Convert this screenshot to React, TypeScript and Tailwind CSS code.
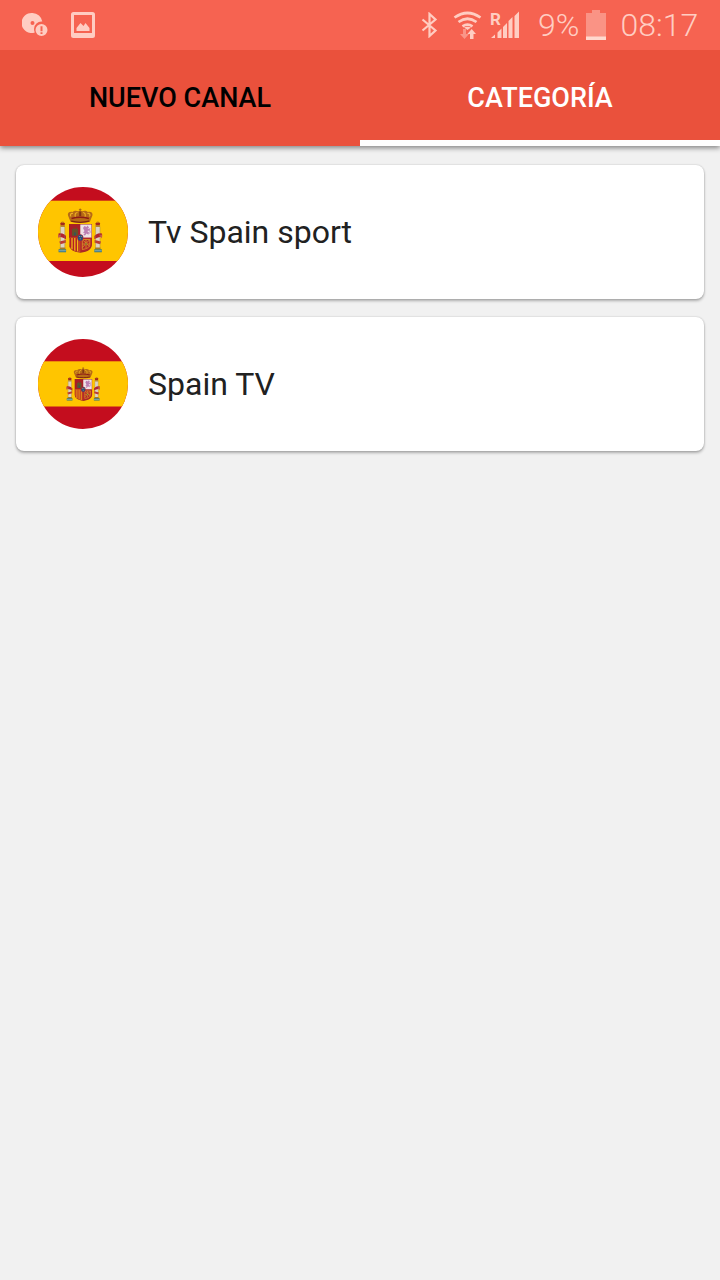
import React from "react";

function Column({ flip = false }: { flip?: boolean }) {
  return (
    <g transform={flip ? "translate(84.4 0) scale(-1 1)" : undefined}>
      <path d="M22.5 39h4.2v22h-4.2z" fill="#dcd3c4" />
      <path d="M22.3 38.2h4.7v1.8h-4.7z" fill="#b98a2f" />
      <path d="M22.2 36.2l1.2-.9h2l1.6 1-.5 2h-3.8z" fill="#a3281e" />
      <path d="M23.7 34.6h1.8v1.2h-1.8z" fill="#c48a1c" />
      <path d="M20.5 46.5c3.5-1 6.500 1 7.500 2.500v3.200c-2-1.500-5-2.700-7.500-2.200z" fill="#b3222c" />
      <path d="M20 47.500l3 1-2.500 3z" fill="#c95b47" />
      <path d="M21.300 54.500l6.500-1.500v2.700l-5.500 1.500z" fill="#c0392f" />
      <path d="M21.800 60.400h5.600v1.700h-5.600z" fill="#a87924" />
      <path d="M20.600 62.200h7.500v3h-7.500z" fill="#2f7180" />
      <path d="M20.800 63.800h7.100" stroke="#d5dfd4" strokeWidth=".6" />
      <path d="M22.400 40v20.500M26.800 40v20.500" stroke="#8f8468" strokeWidth=".4" />
    </g>
  );
}

function Emblem() {
  return (
    <g>
      <Column />
      <Column flip />
      <path d="M32.500 34.800l-2.500-6.300c-.8-2.500 1.500-4.200 4.500-3.500 1.500-1.500 4-1.700 5.600-.7 1-.8 3.200-.8 4.200 0 1.600-1 4.100-.8 5.600.7 3-.7 5.300 1 4.500 3.500l-2.500 6.300c-5 1.500-14.400 1.500-19.400 0z" fill="#b66a16" />
      <path d="M33 29.500c-1.500-2 0-3.500 2-3M37.500 30c-1-2.500 0-4.500 2-4.500M51.400 29.500c1.500-2 0-3.500-2-3M46.900 30c1-2.500 0-4.500-2-4.500" fill="none" stroke="#f0b323" strokeWidth="1.100" />
      <path d="M33.500 31.500c5-1.500 12.400-1.500 17.400 0" fill="none" stroke="#8d1a17" strokeWidth="1.500" />
      <path d="M33.200 34.200c5 1.200 13 1.200 18 0" fill="none" stroke="#7e2413" strokeWidth="1.300" />
      <path d="M41.200 24.500h2v4.500h-2z" fill="#7e3412" />
      <path d="M42.200 21.500v3M40.900 22.700h2.600" stroke="#a15c16" strokeWidth=".9" />
      <path d="M31 37h23v20c0 5-4 7.800-11.500 8.800C35 64.800 31 62 31 57z" fill="#a12a23" />
      <path d="M31.500 37.500h10.800v13.200H31.500z" fill="#a91e26" />
      <path d="M34 42h1.400v-1.500h1.100V42h1.300v-1.500H39V42h1v6.700h-6z" fill="#67502a" />
      <path d="M36.300 45.500h1.400v3h-1.400z" fill="#245969" />
      <path d="M42.300 37.500h11.200v13.200H42.300z" fill="#eee2e7" />
      <path d="M45 41l1.500-2 2 1 1-1.500 1.500 2-1.500 1.500 2.500-.5-.8 2-2 .6 1.800 1.500-.6 2.200-1.800-1.300-1.600 2-1.700-.6 1.600-2-1.900-.2 1.500-1.700z" fill="#bc7fb3" />
      <path d="M51.500 46.500c2-2-1-3 .5-5" fill="none" stroke="#bc7fb3" strokeWidth=".9" />
      <path d="M31.500 50.700h10.800v14.200c-7-1-10.800-3.500-10.800-8z" fill="#f2b716" />
      <path d="M32.600 50.700v10M35.400 50.700v12.500M38.200 50.700v13.500M41 50.700v14" stroke="#b51c25" strokeWidth="1.500" />
      <path d="M42.300 50.700h11.200v6.200c0 4.500-3.500 7-11.200 8z" fill="#b3252a" />
      <path d="M44.300 52.500h7.500v5c0 2.700-2.500 4.200-7.500 5zM44.300 52.500l7 7M51.800 52.500l-7.500 8M48 52.500V61M44.300 57h7.500" fill="none" stroke="#dc9c24" strokeWidth=".8" />
      <circle cx="48" cy="57" r=".8" fill="#557334" />
      <ellipse cx="42.300" cy="50.700" rx="3.100" ry="3.500" fill="#b62a36" />
      <ellipse cx="42.300" cy="50.700" rx="2.500" ry="2.900" fill="#214d83" />
      <path d="M41.300 49.500h.1M43.200 49.500h.1M42.200 51.800h.1" stroke="#d6ac4b" strokeWidth=".9" strokeLinecap="round" />
    </g>
  );
}

function Flag({ wide = false }: { wide?: boolean }) {
  return (
    <svg className="size-[90px] shrink-0 rounded-full" viewBox="0 0 90 90" aria-hidden="true">
      <rect width="90" height="90" fill="#c40d1e" />
      {wide ? (
        <rect y="13.700" width="90" height="60.300" fill="#ffc500" />
      ) : (
        <rect y="22.300" width="90" height="45.200" fill="#ffc500" />
      )}
      <g transform={wide ? undefined : "translate(13.100 12) scale(.76)"}>
        <Emblem />
      </g>
    </svg>
  );
}

function StatusBar() {
  return (
    <div className="flex h-[50px] items-center bg-[#f66351] text-[#ffcdc2]">
      <svg className="ml-[22px] h-[26px] w-[26px]" viewBox="0 0 26 26" fill="currentColor" aria-hidden="true">
        <path fillRule="evenodd" d="M10.500 1a10 10 0 0 1 9.800 8.600A7.400 7.400 0 0 0 12 17c0 1.200.3 2.400.8 3.400A10 10 0 1 1 10.500 1zm0 8a2 2 0 1 0 0 4 2 2 0 0 0 0-4z" />
        <path fillRule="evenodd" d="M19.500 12a6 6 0 1 1 0 12 6 6 0 0 1 0-12zm-1 2.200v5h2v-5zm0 6v1.800h2v-1.800z" />
      </svg>
      <svg className="ml-[23px] h-[26px] w-[24px]" viewBox="0 0 24 26" fill="currentColor" aria-hidden="true">
        <path fillRule="evenodd" d="M2.500 0h19A2.500 2.500 0 0 1 24 2.500v21a2.500 2.500 0 0 1-2.500 2.500h-19A2.500 2.500 0 0 1 0 23.500v-21A2.500 2.500 0 0 1 2.500 0zM3 3v18h18V3z" />
        <path d="M5.500 19v-3l4-5 3 3 2-3 4 5v3z" />
      </svg>
      <svg className="ml-[326px] h-[26px] w-[17px]" viewBox="0 0 17 26" fill="none" stroke="currentColor" strokeWidth="2.200" aria-hidden="true">
        <path d="M1.500 7.500l13 11L8.500 24V2l6 5.500-13 11" />
      </svg>
      <svg className="ml-[15px] h-[30px] w-[29px]" viewBox="0 0 29 30" fill="none" stroke="currentColor" strokeWidth="2.700" aria-hidden="true">
        <path d="M1.500 7.500q13-9 26 0M5.500 12q9-6.500 18 0M9.500 16.300q5-3.400 10 0" />
        <path d="M11 17.600q3.500-1.800 7 0L14.500 20z" fill="currentColor" stroke="none" />
        <path d="M10 19h3v5h3l-4.500 5L7 24h3z" fill="#fa9587" stroke="none" />
        <path d="M17 29h3.500v-5H23l-4.300-5-4.300 5H17z" fill="currentColor" stroke="none" />
      </svg>
      <svg className="ml-[8px] h-[30px] w-[30px]" viewBox="0 0 30 30" fill="currentColor" aria-hidden="true">
        <text x="0" y="15" className="font-['Roboto',sans-serif] text-[17px] font-bold">R</text>
        <path d="M1 28l4-3.500V28zM7.500 22.500l4-4V28h-4zM13 17l4-4v15h-4zM18.500 11l4-4v21h-4zM24.500 6L29 1.500V28h-4.500z" />
      </svg>
      <span className="ml-[18px] text-[32px] leading-[50px] font-light">9%</span>
      <svg className="ml-[7px] h-[30px] w-[20px]" viewBox="0 0 20 30" aria-hidden="true">
        <path d="M6 0h8v3h6v24H0V3h6z" fill="#fa9385" />
        <path d="M0 26.500h20V30H0z" fill="#ffd9cf" />
      </svg>
      <span className="ml-[14px] text-[32px] leading-[50px] font-light">08:17</span>
    </div>
  );
}

function Category({ name, wide = false }: { name: string; wide?: boolean }) {
  return (
    <li className="flex h-[134px] items-center gap-5 rounded-lg bg-white pl-[22px] shadow-[0_2px_3px_rgba(0,0,0,0.28),0_0_2px_rgba(0,0,0,0.2)]">
      <Flag wide={wide} />
      <span className="text-[32px] leading-10 text-[#212121]">{name}</span>
    </li>
  );
}

export default function App() {
  return (
    <div className="flex h-[1280px] w-[720px] flex-col overflow-hidden bg-[#f1f1f1] font-['Roboto',sans-serif]">
      <header className="shadow-[0_2px_5px_rgba(0,0,0,0.45)]">
        <StatusBar />
        <nav className="grid h-24 grid-cols-2 bg-[#ea513c] text-[27px] font-medium">
          <button className="border-b-[6px] border-transparent pt-[6px] text-black">NUEVO CANAL</button>
          <button className="border-b-[6px] border-white pt-[6px] text-white">CATEGORÍA</button>
        </nav>
      </header>
      <ul className="flex flex-col gap-[18px] px-4 pt-[19px]">
        <Category name="Tv Spain sport" wide />
        <Category name="Spain TV" />
      </ul>
    </div>
  );
}
